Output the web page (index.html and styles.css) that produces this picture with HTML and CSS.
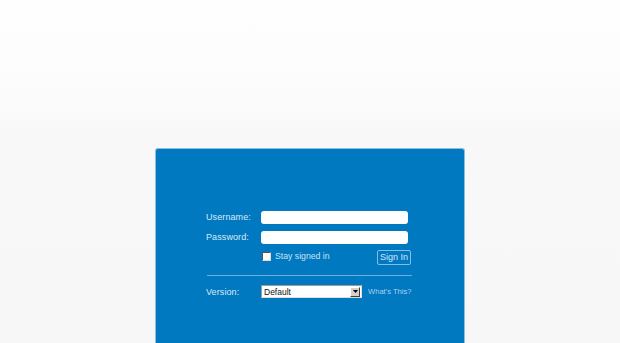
FILE: index.html
```html
<!DOCTYPE html>
<html>
<head>
<meta charset="utf-8">
<link rel="stylesheet" href="styles.css">
</head>
<body>
<div class="page">
  <div class="panel">
    <form class="login">
      <div class="row">
        <label class="label">Username:</label>
        <span class="field"></span>
      </div>
      <div class="row">
        <label class="label">Password:</label>
        <span class="field"></span>
      </div>
      <div class="row options">
        <span class="label"></span>
        <span class="check"><span class="box"></span>Stay signed in</span>
        <span class="btn">Sign In</span>
      </div>
      <div class="rule"></div>
      <div class="row version">
        <label class="label">Version:</label>
        <span class="select"><span class="sel-text">Default</span><span class="arrow"><svg width="5" height="3" viewBox="0 0 5 3"><path d="M0 0H5L2.5 3Z" fill="#000"/></svg></span></span>
        <span class="help">What's This?</span>
      </div>
    </form>
  </div>
</div>
</body>
</html>
```
FILE: styles.css
```css
html, body {
  margin: 0;
  height: 100%;
}
body {
  background: linear-gradient(to bottom, #fefefe 0px, #fdfdfd 70px, #f8f8f8 135px, #f7f7f7 343px);
  font-family: "Liberation Sans", Arial, sans-serif;
  overflow: hidden;
}
.page {
  padding-top: 148px;
}
.panel {
  width: 308px;
  height: 194px;
  margin: 0 auto;
  background: #0079c1;
  border: 1px solid #8fbde0;
  border-bottom: none;
  border-radius: 3px 3px 0 0;
}
.login {
  padding: 61px 0 0 50px;
  width: 210px;
}
.row {
  display: flex;
  align-items: center;
  height: 14px;
}
.row > * {
  flex: none;
}
.row + .row {
  margin-top: 6px;
}
.label {
  width: 55px;
  font-size: 9px;
  color: #dbe9f6;
  letter-spacing: 0.1px;
}
.field {
  width: 147px;
  height: 13px;
  background: #fff;
  border-radius: 3px;
}
.row.options {
  margin-top: 6px;
  height: 15px;
  width: 205px;
}
.check {
  display: flex;
  align-items: center;
  font-size: 8.7px;
  color: #c9e0f3;
  margin-left: 1px;
  margin-top: -3px;
}
.box {
  width: 7px;
  height: 7px;
  background: #fff;
  border-top: 1px solid #555;
  border-left: 1px solid #555;
  border-right: 1px solid #ddd;
  border-bottom: 1px solid #ddd;
  margin-right: 4px;
}
.btn {
  margin-left: auto;
  height: 13px;
  line-height: 13px;
  padding: 0 2px;
  border: 1px solid #86bde6;
  border-radius: 2px;
  font-size: 9px;
  color: #d5e7f6;
}
.rule {
  margin: 10px 0 0 1px;
  height: 1px;
  width: 205px;
  background: #6cb0df;
}
.row.version {
  margin-top: 9px;
  height: 13px;
}
.select {
  display: flex;
  align-items: center;
  width: 99px;
  height: 11px;
  background: #fff;
  border: 1px solid #9a9a9a;
  border-bottom-color: #ddd;
  border-right-color: #ddd;
}
.sel-text {
  flex: 1;
  font-size: 8.5px;
  color: #111;
  padding-left: 2px;
}
.arrow {
  margin-right: 1px;
  background: #d4d0c8;
  border-top: 1px solid #fff;
  border-left: 1px solid #fff;
  border-right: 1px solid #404040;
  border-bottom: 1px solid #404040;
  box-sizing: border-box;
  width: 10px;
  height: 10px;
  display: flex;
  align-items: center;
  justify-content: center;
}
.help {
  margin-left: 6px;
  font-size: 7.6px;
  color: #a9d2f0;
  white-space: nowrap;
}
```
